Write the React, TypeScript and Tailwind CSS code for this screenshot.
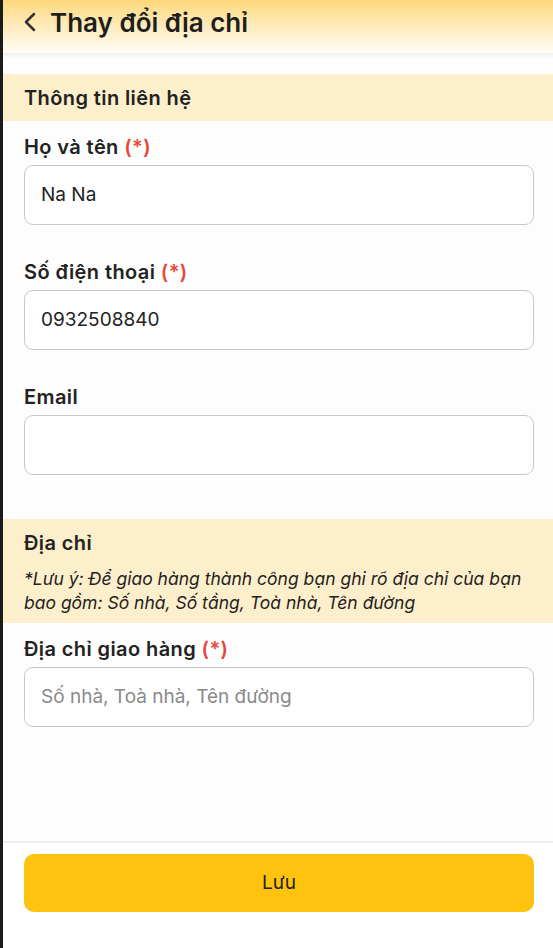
import { ChevronLeft } from "lucide-react";

const Label = ({ text, required }: { text: string; required?: boolean }) => (
  <div className="text-[20px] leading-[27px] font-semibold text-[#222] tracking-[0.4px]">
    {text}
    {required && <span className="text-[#e8483b]"> (*)</span>}
  </div>
);

const Field = ({ label, required, value, placeholder }: any) => (
  <div className="pl-[21px] pr-[19px]">
    <Label text={label} required={required} />
    <div className="mt-[4px] h-[60px] rounded-[9px] border-[1.5px] border-[#c8c8c8] bg-white flex items-center px-[16px]">
      {value ? (
        <span className="text-[19px] text-[#222]">{value}</span>
      ) : (
        <span className="text-[19px] text-[#8a8a8a]">{placeholder}</span>
      )}
    </div>
  </div>
);

export default function App() {
  return (
    <div
      className="h-[948px] w-[553px] flex bg-white overflow-hidden"
      style={{ fontFamily: "Inter, 'Noto Sans', sans-serif" }}
    >
      <div className="w-[3px] bg-[#1b1b1b] shrink-0" />
      <div className="flex-1 flex flex-col">
        <div className="h-[53px] bg-gradient-to-b from-[#fdd87a] to-[#fffdf7]">
          <div className="h-[44px] flex items-center pl-[11px] gap-[4px]">
            <ChevronLeft size={32} strokeWidth={1.9} className="text-[#333]" />
            <span className="text-[26px] font-semibold text-[#1e1e1e]">Thay đổi địa chỉ</span>
          </div>
        </div>
        <div className="h-[5px] bg-gradient-to-b from-[#f1f1f1] to-[#fbfbfb]" />
        <div className="flex-1 bg-[#fdfdfd] flex flex-col">
          <div className="mt-[16px] h-[47px] bg-[#fdefcc] flex items-center px-[21px]">
            <span className="text-[20px] font-semibold text-[#222] tracking-[0.4px]">Thông tin liên hệ</span>
          </div>
          <div className="mt-[13px] flex flex-col gap-[34px]">
            <Field label="Họ và tên" required value="Na Na" />
            <Field label="Số điện thoại" required value="0932508840" />
            <Field label="Email" />
          </div>
          <div className="mt-[44px] h-[104px] bg-[#fdefcc] px-[21px] pt-[11px]">
            <div className="text-[20px] leading-[27px] font-semibold text-[#222] tracking-[0.4px]">Địa chỉ</div>
            <div className="mt-[10px] text-[17.5px] leading-[24px] italic text-[#222] whitespace-nowrap">
              *Lưu ý: Để giao hàng thành công bạn ghi rõ địa chỉ của bạn
              <br />
              bao gồm: Số nhà, Số tầng, Toà nhà, Tên đường
            </div>
          </div>
          <div className="mt-[13px]">
            <Field label="Địa chỉ giao hàng" required placeholder="Số nhà, Toà nhà, Tên đường" />
          </div>
        </div>
        <div className="h-[107px] border-t-[2px] border-[#ededed] bg-white pl-[21px] pr-[19px] pt-[11px]">
          <button className="w-full h-[58px] rounded-[10px] bg-[#ffc20e] text-[19px] text-[#222]">
            Lưu
          </button>
        </div>
      </div>
    </div>
  );
}
